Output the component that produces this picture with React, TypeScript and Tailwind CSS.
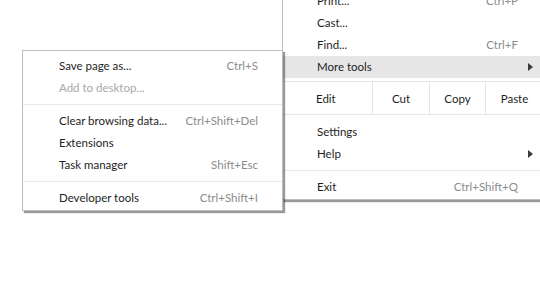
const font = { fontFamily: 'Lato, "Open Sans", sans-serif' };

type Item = { label: string; shortcut?: string; arrow?: boolean; disabled?: boolean; active?: boolean };

function Arrow() {
  return (
    <svg width="5" height="8" viewBox="0 0 5 8" className="fill-[#3a3a3a]">
      <path d="M0 0 L5 4 L0 8 Z" />
    </svg>
  );
}

function MainRow({ item }: { item: Item }) {
  return (
    <div
      className={`flex h-[22px] items-center whitespace-nowrap pl-[34px] pr-[10px] ${item.active ? 'bg-[#e6e6e6]' : ''}`}
    >
      <span className="flex-1 text-[#1e1e1e]">{item.label}</span>
      <span className="text-[#8c8c8c]">{item.shortcut}</span>
      <span className="flex w-[15px] justify-end">{item.arrow && <Arrow />}</span>
    </div>
  );
}

function SubRow({ item }: { item: Item }) {
  return (
    <div className="flex h-[22px] items-center whitespace-nowrap pl-[36px] pr-[24px]">
      <span className={`flex-1 ${item.disabled ? 'text-[#a8a8a8]' : 'text-[#1e1e1e]'}`}>{item.label}</span>
      <span className="text-[#8c8c8c]">{item.shortcut}</span>
    </div>
  );
}

function Separator() {
  return (
    <div className="py-[5px]">
      <div className="h-px bg-[#e9e9e9]" />
    </div>
  );
}

export default function App() {
  return (
    <div className="relative h-[281px] w-[540px] overflow-hidden bg-white text-[11.5px]" style={font}>
      {/* Main menu */}
      <div className="absolute left-[282px] top-[-11px] w-[262px] border border-[#bcbcbc] bg-white pb-[1px] shadow-[2px_2px_1px_rgba(0,0,0,0.4)]">
        <MainRow item={{ label: 'Print...', shortcut: 'Ctrl+P' }} />
        <MainRow item={{ label: 'Cast...' }} />
        <MainRow item={{ label: 'Find...', shortcut: 'Ctrl+F' }} />
        <MainRow item={{ label: 'More tools', arrow: true, active: true }} />
        <div className="mt-[3px] flex h-[34px] border-y border-[#e6e6e6] text-[#1e1e1e]">
          <div className="flex flex-1 items-center pl-[33px] pt-[2px]">Edit</div>
          <div className="flex w-[57px] items-center justify-center border-l border-[#e6e6e6] pt-[2px]">Cut</div>
          <div className="flex w-[56px] items-center justify-center border-l border-[#e6e6e6] pt-[2px]">Copy</div>
          <div className="flex w-[58px] items-center justify-center border-l border-[#e6e6e6] pt-[2px]">Paste</div>
        </div>
        <div className="h-[6px]" />
        <MainRow item={{ label: 'Settings' }} />
        <MainRow item={{ label: 'Help', arrow: true }} />
        <Separator />
        <MainRow item={{ label: 'Exit', shortcut: 'Ctrl+Shift+Q' }} />
      </div>

      {/* More tools submenu */}
      <div className="absolute left-[22px] top-[50px] w-[261px] border border-[#bcbcbc] bg-white pt-[4px] pb-[1px] shadow-[2px_2px_1px_rgba(0,0,0,0.4)]">
        <SubRow item={{ label: 'Save page as...', shortcut: 'Ctrl+S' }} />
        <SubRow item={{ label: 'Add to desktop...', disabled: true }} />
        <Separator />
        <SubRow item={{ label: 'Clear browsing data...', shortcut: 'Ctrl+Shift+Del' }} />
        <SubRow item={{ label: 'Extensions' }} />
        <SubRow item={{ label: 'Task manager', shortcut: 'Shift+Esc' }} />
        <Separator />
        <SubRow item={{ label: 'Developer tools', shortcut: 'Ctrl+Shift+I' }} />
      </div>
    </div>
  );
}
